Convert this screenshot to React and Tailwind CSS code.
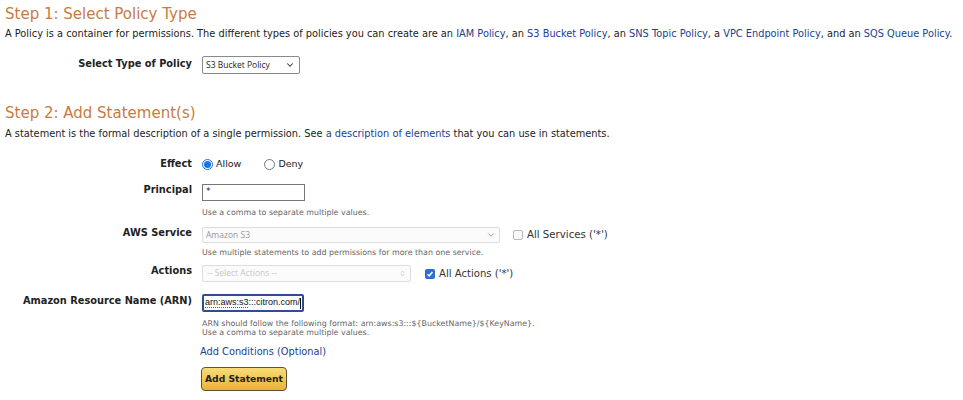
import { ChevronDown, ChevronsUpDown } from 'lucide-react';

const font = { fontFamily: '"DejaVu Sans", Verdana, sans-serif' };

function Link({ children }) {
  return <span className="text-[#23408f]">{children}</span>;
}

function Row({ label, children, className = '', labelClass = '' }) {
  return (
    <div className={`flex items-start ${className}`}>
      <div className={`w-[197px] shrink-0 text-right font-bold text-[9.8px] leading-[12px] text-[#222] pr-[10px] ${labelClass}`}>{label}</div>
      <div className="min-w-0">{children}</div>
    </div>
  );
}

function Hint({ children, className = '' }) {
  return <div className={`text-[7.9px] leading-[9px] text-[#666] ${className}`}>{children}</div>;
}

export default function App() {
  return (
    <div className="w-[963px] h-[400px] bg-white overflow-hidden px-[5px] text-[#222]" style={font}>
      {/* Step 1 */}
      <h1 className="text-[15px] leading-[20px] text-[#c87b3f] pt-[4px]">Step 1: Select Policy Type</h1>
      <p className="text-[9.8px] leading-[12px] mt-[4px] whitespace-nowrap">
        A Policy is a container for permissions. The different types of policies you can create are an{' '}
        <Link>IAM Policy</Link>, an <Link>S3 Bucket Policy</Link>, an <Link>SNS Topic Policy</Link>, a{' '}
        <Link>VPC Endpoint Policy</Link>, and an <Link>SQS Queue Policy</Link>.
      </p>

      <Row label="Select Type of Policy" className="mt-[16px]" labelClass="pt-[2px]">
        <div className="w-[98px] h-[18px] border border-[#8a8a8a] rounded-[2px] flex items-center justify-between pl-[3px] pr-[4px] text-[8.5px]" style={{ fontFamily: '"Open Sans", sans-serif' }}>
          <span>S3 Bucket Policy</span>
          <ChevronDown size={10} strokeWidth={2.5} className="text-[#333]" />
        </div>
      </Row>

      {/* Step 2 */}
      <h2 className="text-[15px] leading-[20px] text-[#c87b3f] mt-[29px]">Step 2: Add Statement(s)</h2>
      <p className="text-[9.8px] leading-[12px] mt-[5px] whitespace-nowrap">
        A statement is the formal description of a single permission. See <Link>a description of elements</Link> that you can use in statements.
      </p>

      <Row label="Effect" className="mt-[18px]">
        <div className="flex items-center h-[12px] text-[9.5px]">
          <span className="w-[11px] h-[11px] rounded-full border border-[#1a73e8] flex items-center justify-center">
            <span className="w-[7px] h-[7px] rounded-full bg-[#1a73e8]" />
          </span>
          <span className="ml-[3px]">Allow</span>
          <span className="ml-[23px] w-[11px] h-[11px] rounded-full border border-[#777]" />
          <span className="ml-[3px]">Deny</span>
        </div>
      </Row>

      <Row label="Principal" className="mt-[14px]">
        <div className="w-[103px] h-[17px] border border-[#777] text-[9px] leading-[13px] px-[3px]">*</div>
        <Hint className="mt-[7px]">Use a comma to separate multiple values.</Hint>
      </Row>

      <Row label="AWS Service" className="mt-[10px]">
        <div className="flex items-center">
          <div className="w-[298px] h-[16px] border border-[#ddd] bg-[#fbfbfb] rounded-[2px] flex items-center justify-between px-[3px] text-[8.5px] text-[#999]" style={{ fontFamily: '"Open Sans", sans-serif' }}>
            <span>Amazon S3</span>
            <ChevronDown size={10} strokeWidth={2} className="text-[#888]" />
          </div>
          <span className="ml-[13px] w-[10px] h-[10px] border border-[#bbb] rounded-[2px] bg-[#f8f8f8]" />
          <span className="ml-[4px] text-[10.2px] text-[#333]">All Services ('*')</span>
        </div>
        <Hint className="mt-[5px]">Use multiple statements to add permissions for more than one service.</Hint>
      </Row>

      <Row label="Actions" className="mt-[8px]">
        <div className="flex items-center">
          <div className="w-[209px] h-[17px] border border-[#ddd] bg-[#fbfbfb] rounded-[2px] flex items-center justify-between px-[4px] text-[8.5px] text-[#c8c8c8]" style={{ fontFamily: '"Open Sans", sans-serif' }}>
            <span>-- Select Actions --</span>
            <ChevronsUpDown size={7} strokeWidth={2} className="text-[#aaa]" />
          </div>
          <span className="ml-[14px] w-[10px] h-[10px] rounded-[2px] bg-[#2a6fd6] flex items-center justify-center">
            <svg width="8" height="8" viewBox="0 0 8 8"><path d="M1.5 4.2 L3.2 5.8 L6.5 2" fill="none" stroke="white" strokeWidth="1.5" /></svg>
          </span>
          <span className="ml-[4px] text-[10.1px] text-[#333]">All Actions ('*')</span>
        </div>
      </Row>

      <Row label="Amazon Resource Name (ARN)" className="mt-[12px]" labelClass="pt-[1px]">
        <div
          className="w-[102px] h-[18px] border-2 border-[#2b4f8f] rounded-[2px] text-[9px] pl-[1px] text-[#111] flex items-center whitespace-nowrap"
          style={{ fontFamily: '"Liberation Sans", Arial, sans-serif' }}
        >
          <span className="underline decoration-dotted decoration-[#d0342c] decoration-[1px] underline-offset-2">arn:aws:s3</span>
          <span>:::citron.com/</span>
          <span className="w-[1px] h-[11px] bg-[#111]" />
        </div>
        <Hint className="mt-[7px]">
          ARN should follow the following format: arn:aws:s3:::${'{'}BucketName{'}'}/${'{'}KeyName{'}'}.<br />
          Use a comma to separate multiple values.
        </Hint>
      </Row>

      <div className="ml-[195px] mt-[9px] text-[9.8px] leading-[12px] text-[#23408f]">Add Conditions (Optional)</div>
      <div className="ml-[196px] mt-[9px]">
        <div className="w-[86px] h-[24px] rounded-[4px] border border-[#5e5236] bg-gradient-to-b from-[#f8dc78] to-[#e9b330] flex items-center justify-center text-[9.2px] font-bold text-[#222]">
          Add Statement
        </div>
      </div>
    </div>
  );
}
